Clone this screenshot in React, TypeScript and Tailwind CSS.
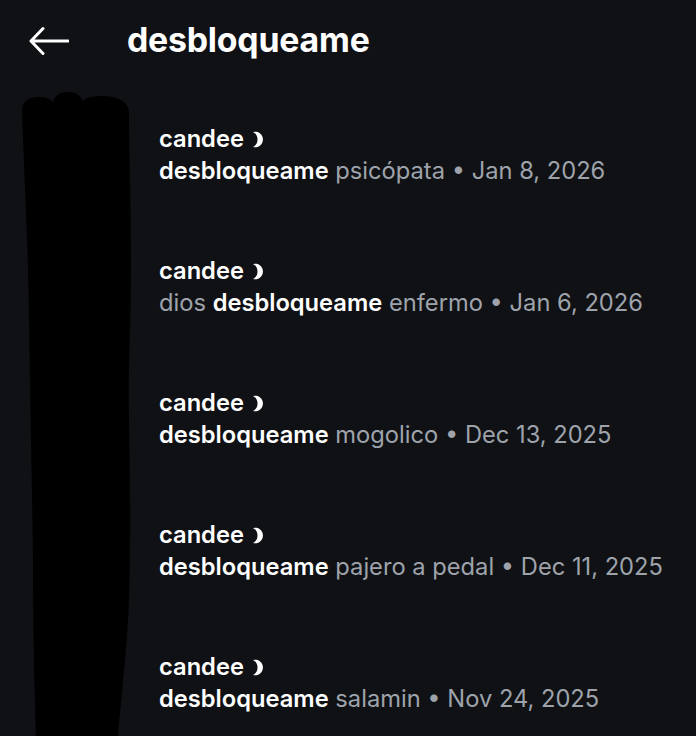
const messages = [
    { pre: '', text: 'psicópata', date: 'Jan 8, 2026' },
    { pre: 'dios', text: 'enfermo', date: 'Jan 6, 2026' },
    { pre: '', text: 'mogolico', date: 'Dec 13, 2025' },
    { pre: '', text: 'pajero a pedal', date: 'Dec 11, 2025' },
    { pre: '', text: 'salamin', date: 'Nov 24, 2025' },
];

function Moon() {
    return (
        <svg width="13" height="17" viewBox="0 0 13 17" className="inline-block ml-[7px] align-[-1px]">
            <path d="M2 1 A7.8 7.8 0 1 1 2 16 A8.5 8.5 0 0 0 2 1 Z" fill="#fff" />
        </svg>
    );
}

export default function App() {
    return (
        <div
            className="relative w-[696px] h-[736px] overflow-hidden bg-[#0f1115] text-white"
            style={{ fontFamily: 'Inter, "Noto Sans", "DejaVu Sans", sans-serif' }}
        >
            {/* Header */}
            <div className="h-[80px] flex items-center">
                <svg width="40" height="30" viewBox="0 0 40 30" className="ml-[29px] mt-[1px]">
                    <path d="M39 15 H3 M14 2.5 L2 15 L14 27.5" stroke="#fff" strokeWidth="3" fill="none" strokeLinecap="round" strokeLinejoin="round" />
                </svg>
                <h1 className="ml-[58px] text-[33.8px] font-bold tracking-[-0.2px]">desbloqueame</h1>
            </div>

            {/* Search results */}
            <div className="pt-[43px] pl-[159px] flex flex-col gap-[68px]">
                {messages.map((m, i) => (
                    <div key={i} className="flex flex-col text-[23.7px] leading-[32px]">
                        <div className="font-semibold h-[32px]">
                            candee<Moon />
                        </div>
                        <div className="text-[#9ea3ab] whitespace-nowrap h-[32px]">
                            {m.pre && <span>{m.pre} </span>}
                            <span className="font-semibold text-white">desbloqueame</span> {m.text} • {m.date}
                        </div>
                    </div>
                ))}
            </div>

            {/* redacted avatars */}
            <svg className="absolute left-0 top-0" width="160" height="736" viewBox="0 0 160 736">
                <path
                    d="M22 112 C22 100 30 97 40 97 C46 97 50 99 53 102 C55 95 60 92 68 92 C76 92 80 95 83 101 C87 97 93 96 102 96 C115 96 128 100 129 112 C129 150 131 200 131 260 C131 330 128 360 129 420 C130 480 131 540 129 600 C127 650 121 700 118 736 L36 736 C34 680 33 620 33 560 C32 480 30 400 29 320 C28 240 24 170 22 112 Z"
                    fill="#000"
                />
            </svg>
        </div>
    );
}
